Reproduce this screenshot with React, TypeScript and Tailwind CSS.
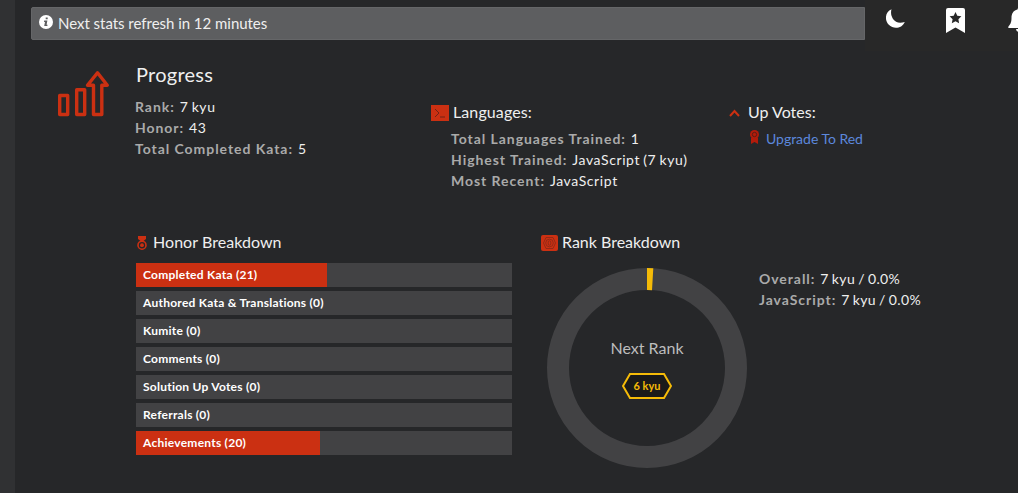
import React from "react";

function Stat({ label, value, compact = false }: { label: string; value: string; compact?: boolean }) {
  return (
    <div className="h-[21px] whitespace-nowrap text-[14px] leading-[21px] text-[#efefef]">
      <b className="mr-[5px] font-bold tracking-[0.95px] text-[#aaaaaa]">{label}</b>
      <span className={compact ? "tracking-[0.4px] [word-spacing:-1px]" : "tracking-[0.6px] [word-spacing:-1px]"}>{value}</span>
    </div>
  );
}

const bars = [
  { label: "Completed Kata (21)", width: 191 },
  { label: "Authored Kata & Translations (0)", width: 0 },
  { label: "Kumite (0)", width: 0 },
  { label: "Comments (0)", width: 0 },
  { label: "Solution Up Votes (0)", width: 0 },
  { label: "Referrals (0)", width: 0 },
  { label: "Achievements (20)", width: 184 },
];

function InfoIcon() {
  return (
    <svg className="mt-[7px] h-[14px] w-[14px] shrink-0" viewBox="0 0 14 14">
      <circle cx="7" cy="7" r="7" fill="#fff" />
      <path d="M6.7 2.5h2v1.8h-2zM5.2 5.6h3.2L7.6 9.7h1l-.3 1.2H5.2l.8-4h-1z" fill="#5d5e60" />
    </svg>
  );
}

function ProgressIcon() {
  return (
    <svg className="mt-[6px] h-[48px] w-[54px]" viewBox="0 0 54 48" fill="none" stroke="#cb3012" strokeWidth="3.400" strokeLinejoin="round">
      <path d="M3.700 25.500h8v19h-8zM20.700 19.700h8v24.800h-8z" />
      <path d="M37.500 44.500v-29.300h-6L41.500 2.800l9.800 12.400h-5.500v29.300z" />
    </svg>
  );
}

function MedalIcon() {
  return (
    <svg className="h-[14px] w-[10px]" viewBox="0 0 10 14">
      <path d="M1 0h8v3L6.500 5h-3L1 3z" fill="#cb3012" />
      <circle cx="5" cy="9.200" r="4" fill="none" stroke="#cb3012" strokeWidth="1.600" />
      <circle cx="5" cy="9.200" r="1.900" fill="#cb3012" />
    </svg>
  );
}

export default function App() {
  return (
    <div className="flex h-[493px] w-[1018px] overflow-hidden bg-[#262729] font-['Lato',sans-serif] text-[#efefef]">
      <div className="w-[15px] shrink-0 bg-[#303133]" />
      <div className="flex min-w-0 flex-1 flex-col">
        <header className="flex h-[52px] shrink-0">
          <div className="ml-4 mt-[7px] flex h-[33px] w-[834px] shrink-0 gap-[5px] rounded-l-[2px] border border-[#656668] bg-[#5d5e60] pl-[7px] text-[15px] leading-[30px]">
            <InfoIcon />
            <span className="tracking-[-0.03px]">Next stats refresh in 12 minutes</span>
          </div>
          <div className="flex h-[51px] flex-1 bg-[#282828] pl-[21px]">
            <svg className="mt-[9px] h-[19px] w-[19px] shrink-0" viewBox="0 0 19 19">
              <path d="M5.500.3C-1 3.200-1.700 11 2.800 15.800C7.700 20.700 16 19.500 18.800 12.900C13 14.600 9.500 13.200 7 9.900C5 7 4.600 3.500 5.500.3z" fill="#fff" />
            </svg>
            <svg className="ml-[41px] mt-2 h-[25px] w-[19px] shrink-0" viewBox="0 0 19 25">
              <path d="M2 0h15q2 0 2 2v23l-9.500-5.500L0 25V2q0-2 2-2z" fill="#fff" />
              <path d="m9.500 4 1.800 3.700 4.100.6-3 2.900.7 4.100-3.600-2-3.700 2 .8-4.100-3-2.900 4.100-.6z" fill="#282828" />
            </svg>
            <svg className="ml-[43px] mt-[8px] h-[25px] w-[22px] shrink-0" viewBox="0 0 22 25">
              <path d="M9.500 1.500a1.500 1.500 0 0 1 3 0C17 2.500 18.500 6 18.500 10c0 5 1.500 6.500 3 8.500.8 1 .2 1.500-.5 1.500H1c-.7 0-1.300-.5-.5-1.500C2 16.500 3.500 15 3.500 10c0-4 1.500-7.500 6-8.500zM8 21h6q-.5 3-3 3t-3-3z" fill="#fff" />
            </svg>
          </div>
        </header>

        <section className="flex h-[180px] shrink-0 pl-[41px]">
          <div className="w-[79px] shrink-0 pt-[12px]"><ProgressIcon /></div>
          <div className="w-[296px] shrink-0 pt-[7px]">
            <h2 className="mb-[7px] h-[30px] pl-px text-[20px] leading-[30px] tracking-[0.25px]">Progress</h2>
            <Stat label="Rank:" value="7 kyu" />
            <Stat label="Honor:" value="43" />
            <Stat label="Total Completed Kata:" value="5" />
          </div>
          <div className="w-[298px] shrink-0 pt-[48px]">
            <div className="flex h-[24px] items-center gap-[4px] text-[16px] leading-[24px] tracking-[0.1px]">
              <svg className="mt-[2px] h-[16px] w-[18px]" viewBox="0 0 18 16">
                <path d="M0 0h18v16H0z" fill="#cb3012" />
                <path d="m4 4 4 4-4 4M9 12h5" stroke="#702317" fill="none" />
              </svg>
              Languages:
            </div>
            <div className="pl-5 pt-[4px]">
              <Stat label="Total Languages Trained:" value="1" />
              <Stat label="Highest Trained:" value="JavaScript (7 kyu)" />
              <Stat label="Most Recent:" value="JavaScript" />
            </div>
          </div>
          <div className="pt-[48px]">
            <div className="flex h-[24px] items-center gap-[8px] text-[16px] leading-[24px]">
              <svg className="mt-px h-[8px] w-[11px]" viewBox="0 0 11 8"><path d="m1 7 4.500-5L10 7" fill="none" stroke="#cb3012" strokeWidth="2" /></svg>
              Up Votes:
            </div>
            <div className="flex items-center gap-[7px] pl-[21px] pt-[4px] text-[14px] leading-[21px] tracking-[-0.02px] text-[#5c88dc]">
              <svg className="mb-[3px] h-[14px] w-[9px]" viewBox="0 0 9 14">
                <path d="M1 8h7v6l-3.500-2L1 14z" fill="#b31b0b" />
                <circle cx="4.500" cy="4.500" r="4.500" fill="#b31b0b" />
                <circle cx="4.500" cy="4.500" r="2.200" fill="none" stroke="#471e17" strokeWidth=".8" />
              </svg>
              Upgrade To Red
            </div>
          </div>
        </section>

        <section className="flex flex-1 pl-[121px]">
          <div className="w-[405px] shrink-0">
            <div className="flex h-[22px] items-center gap-[6px] pl-[1px] text-[16px] tracking-[0.05px]"><MedalIcon /><span className="pb-[2px]">Honor Breakdown</span></div>
            <div className="mt-[9px] flex w-[376px] flex-col gap-1">
              {bars.map((bar) => (
                <div key={bar.label} className="grid h-6 bg-[#424244]">
                  <div className="col-start-1 row-start-1 bg-[#cb3012]" style={{ width: bar.width }} />
                  <span className="col-start-1 row-start-1 pl-[7px] text-[12px] font-bold leading-[24px] tracking-[0.25px] text-white">{bar.label}</span>
                </div>
              ))}
            </div>
          </div>
          <div className="w-[218px] shrink-0">
            <div className="flex h-[22px] items-center gap-[4px] text-[16px]">
              <svg className="h-4 w-[17px]" viewBox="0 0 17 16" fill="none" stroke="#852817" strokeWidth=".8">
                <rect width="17" height="16" rx="2" fill="#cb3012" stroke="none" />
                <path d="M5 2.500h7L14.500 8L12 13.500H5L2.500 8z" /><circle cx="8.500" cy="8" r="3.800" /><rect x="7.200" y="5.800" width="2.600" height="4.400" rx="1.200" />
              </svg>
              <span className="pb-[2px]">Rank Breakdown</span>
            </div>
            <div className="ml-[6px] mt-[14px] grid h-[200px] w-[200px]">
              <svg className="col-start-1 row-start-1" viewBox="0 0 200 200">
                <circle cx="100" cy="100" r="89" fill="none" stroke="#424244" strokeWidth="22" />
                <path d="M100 0Q103 0 106.300.2L105 22.200Q102.500 22 100 22z" fill="#f5bb08" />
              </svg>
              <div className="col-start-1 row-start-1 flex flex-col items-center pt-[68px]">
                <span className="text-[16px] leading-6 text-[#bdbdbd]">Next Rank</span>
                <div className="mt-[13px] grid h-[26px] w-[50px] place-items-center">
                  <svg className="col-start-1 row-start-1" width="50" height="26" viewBox="0 0 50 26"><path d="M8 1h34l7 12-7 12H8L1 13z" fill="#1a1a1a" stroke="#f5bb08" strokeWidth="2" /></svg>
                  <span className="col-start-1 row-start-1 text-[11px] font-bold leading-4 text-[#f5bb08]">6 kyu</span>
                </div>
              </div>
            </div>
          </div>
          <div className="pt-[36px]">
            <Stat label="Overall:" value="7 kyu / 0.0%" compact />
            <Stat label="JavaScript:" value="7 kyu / 0.0%" compact />
          </div>
        </section>
      </div>
    </div>
  );
}
